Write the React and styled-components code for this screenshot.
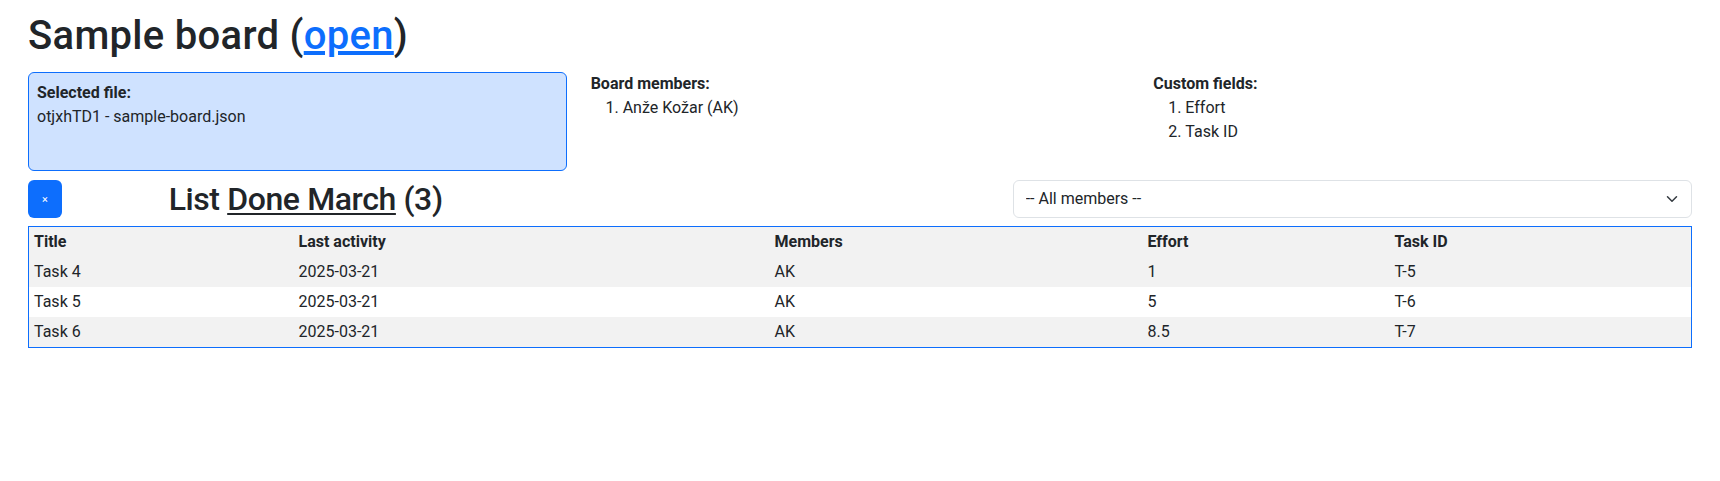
import React from "react";
import styled, { createGlobalStyle } from "styled-components";

const GlobalStyle = createGlobalStyle`
  * {
    box-sizing: border-box;
  }
  body {
    margin: 0;
    font-family: Roboto, "Liberation Sans", sans-serif;
    font-size: 16px;
    line-height: 1.5;
    color: #212529;
    background: #fff;
  }
`;

const Page = styled.div`
  padding: 12px 28px 0;
`;

const Title = styled.h1`
  margin: 0 0 12px;
  font-size: 40px;
  font-weight: 500;
  line-height: 1.2;
  letter-spacing: 0.3px;
`;

const TitleLink = styled.a`
  color: #0d6efd;
  text-decoration: underline;
`;

const Row = styled.div`
  display: grid;
  grid-template-columns: repeat(12, 1fr);
  column-gap: 24px;
  align-items: ${({ $align }) => $align || "stretch"};
  margin-bottom: ${({ $gap }) => $gap || 0}px;
`;

const Col = styled.div`
  grid-column: ${({ $start }) => ($start ? `${$start} / span ` : "span ")}${({ $span }) => $span};
  min-width: 0;
`;

const FileBox = styled.div`
  min-height: 99px;
  padding: 8px;
  background: #cfe2ff;
  border: 1px solid #0d6efd;
  border-radius: 6px;
`;

const Label = styled.div`
  font-weight: 700;
`;

const List = styled.ol`
  margin: 0;
  padding-left: 32px;
`;

const CloseButton = styled.button`
  width: 34px;
  height: 38px;
  padding: 0;
  border: none;
  border-radius: 6px;
  background: #0d6efd;
  color: #fff;
  font-family: inherit;
  font-size: 11px;
  line-height: 1;
  cursor: pointer;
`;

const ListHeading = styled.h2`
  margin: 0;
  font-size: 32px;
  font-weight: 500;
  line-height: 1.2;
  letter-spacing: -0.4px;
`;

const ListName = styled.span`
  text-decoration: underline;
  text-underline-offset: 3px;
  text-decoration-thickness: 2px;
`;

const SelectWrap = styled.div`
  position: relative;
`;

const Select = styled.select`
  display: block;
  width: 100%;
  height: 38px;
  padding: 6px 36px 6px 12px;
  border: 1px solid #dee2e6;
  border-radius: 6px;
  background: #fff;
  color: #212529;
  font-family: inherit;
  font-size: 16px;
  line-height: 1.5;
  appearance: none;
`;

const Chevron = styled.svg`
  position: absolute;
  right: 14px;
  top: 13px;
  width: 12px;
  height: 12px;
  pointer-events: none;
`;

const Table = styled.table`
  width: 100%;
  table-layout: fixed;
  border-collapse: collapse;
  border: 1px solid #0d6efd;
`;

const Th = styled.th`
  width: ${({ $w }) => ($w ? `${$w}px` : "auto")};
  padding: 3px 5px;
  text-align: left;
  font-weight: 700;
`;

const Tr = styled.tr`
  background: ${({ $striped }) => ($striped ? "#f2f2f2" : "#fff")};
`;

const Td = styled.td`
  padding: 3px 5px;
`;

const columns = [
  { title: "Title", width: 265 },
  { title: "Last activity", width: 476 },
  { title: "Members", width: 373 },
  { title: "Effort", width: 247 },
  { title: "Task ID" },
];

const cards = [
  ["Task 4", "2025-03-21", "AK", "1", "T-5"],
  ["Task 5", "2025-03-21", "AK", "5", "T-6"],
  ["Task 6", "2025-03-21", "AK", "8.5", "T-7"],
];

export default function App() {
  return (
    <Page>
      <GlobalStyle />
      <Title>
        Sample board (<TitleLink href="#">open</TitleLink>)
      </Title>

      <Row $gap={9}>
        <Col $span={4}>
          <FileBox>
            <Label>Selected file:</Label>
            <div>otjxhTD1 - sample-board.json</div>
          </FileBox>
        </Col>
        <Col $span={4}>
          <Label>Board members:</Label>
          <List>
            <li>Anže Kožar (AK)</li>
          </List>
        </Col>
        <Col $span={4}>
          <Label>Custom fields:</Label>
          <List>
            <li>Effort</li>
            <li>Task ID</li>
          </List>
        </Col>
      </Row>

      <Row $gap={8} $align="center">
        <Col $span={1}>
          <CloseButton>×</CloseButton>
        </Col>
        <Col $span={6}>
          <ListHeading>
            List <ListName>Done March</ListName> (3)
          </ListHeading>
        </Col>
        <Col $start={8} $span={5}>
          <SelectWrap>
            <Select defaultValue="">
              <option value="">-- All members --</option>
              <option value="AK">Anže Kožar (AK)</option>
            </Select>
            <Chevron viewBox="0 0 16 16" fill="none">
              <path d="m2 5 6 6 6-6" stroke="#343a40" strokeWidth="2" strokeLinecap="round" strokeLinejoin="round" />
            </Chevron>
          </SelectWrap>
        </Col>
      </Row>

      <Table>
        <thead>
          <Tr $striped>
            {columns.map((c) => (
              <Th key={c.title} $w={c.width}>{c.title}</Th>
            ))}
          </Tr>
        </thead>
        <tbody>
          {cards.map((row, i) => (
            <Tr key={row[0]} $striped={i % 2 === 0}>
              {row.map((cell, j) => (
                <Td key={j}>{cell}</Td>
              ))}
            </Tr>
          ))}
        </tbody>
      </Table>
    </Page>
  );
}
